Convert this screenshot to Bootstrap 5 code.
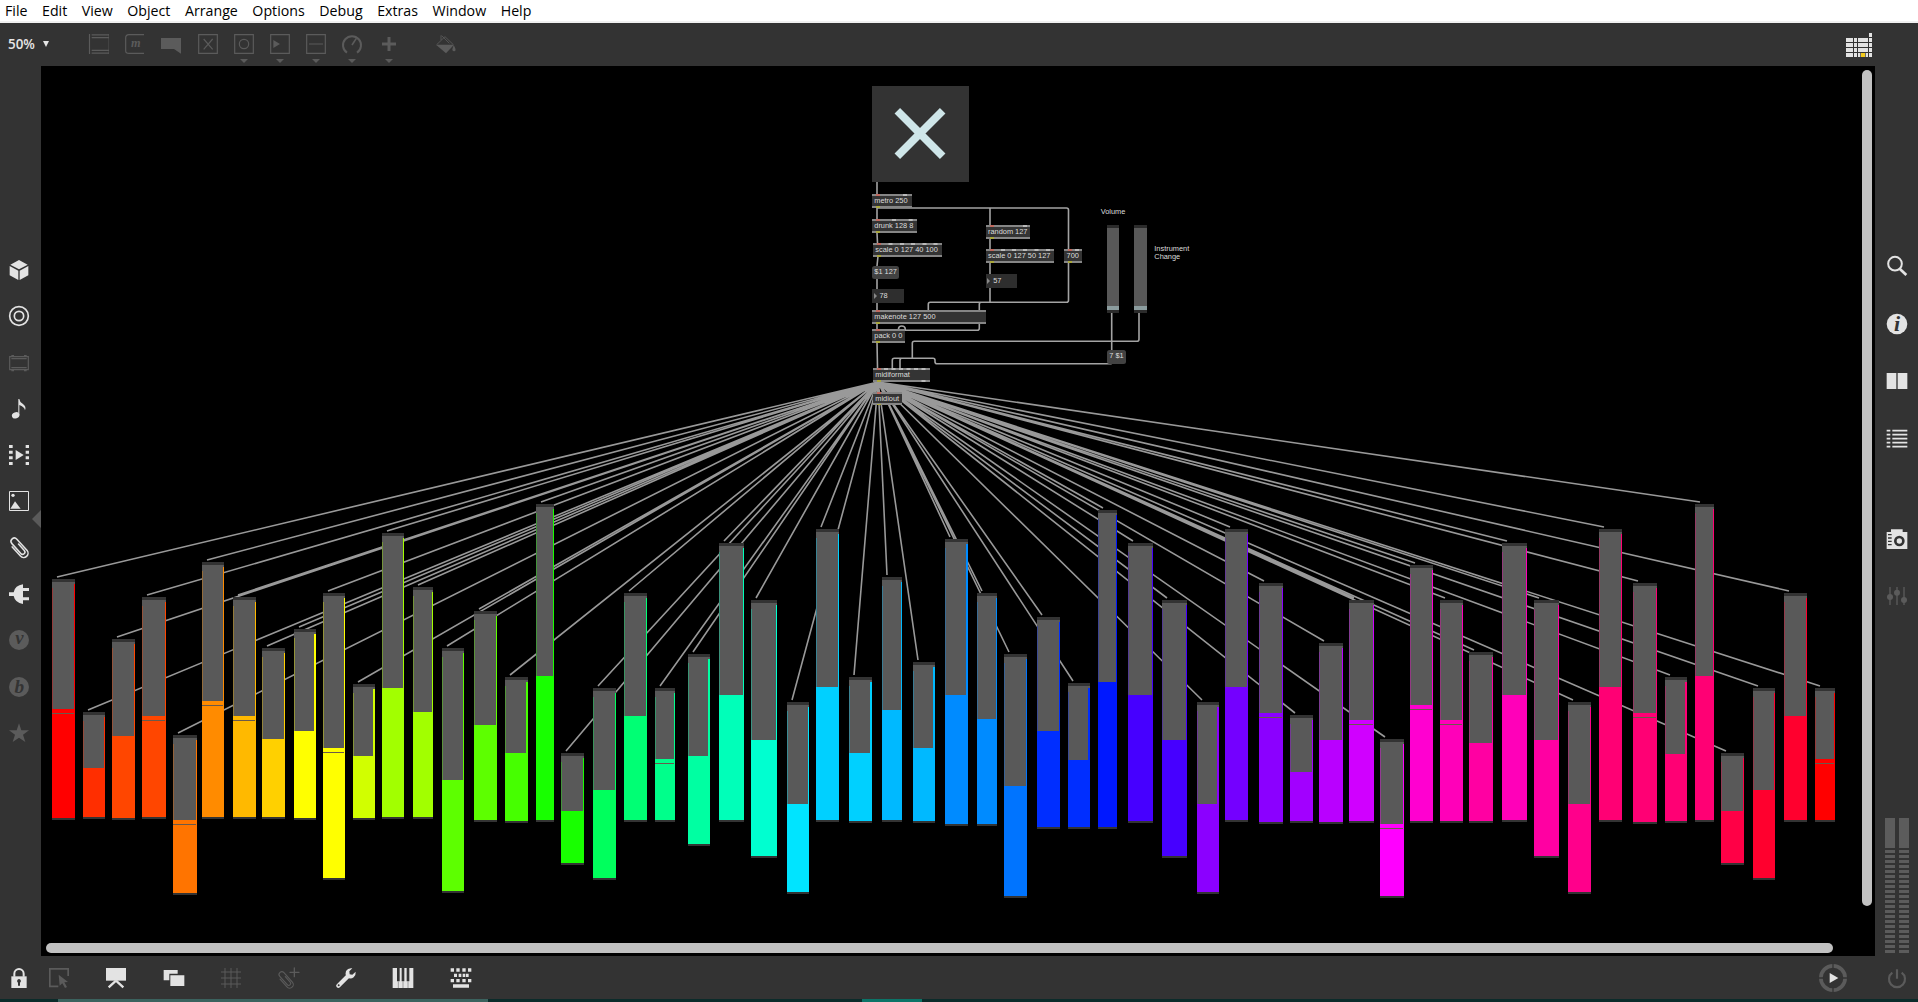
<!DOCTYPE html>
<html lang="en">
<head>
<meta charset="utf-8">
<title>Patcher</title>
<link href="https://cdn.jsdelivr.net/npm/bootstrap@5.3.0/dist/css/bootstrap.min.css" rel="stylesheet">
<style>
  html, body { height: 100%; overflow: hidden; }
  body { background: #333; font-family: "Open Sans", "Noto Sans", sans-serif; line-height: 1; }
  svg { display: block; overflow: visible; flex: none; }
  .menu-strip { height: 23px; background: #fff; border-bottom: 2px solid #f0f0f0; padding-left: 5px; gap: 14.55px; font-size: 14.2px; color: #000; }
  .menu-strip a { color: #000; text-decoration: none; line-height: 21px; }
  .tool-strip { height: 43px; padding: 11px 46px 0 8px; }
  .zoom-box { width: 81px; font-size: 13.4px; font-weight: 600; color: #e6e6e6; padding-top: 4px; gap: 8px; }
  .zoom-arrow { border: 3.5px solid transparent; border-top: 6px solid #e6e6e6; border-bottom: 0; margin-top: 3px; }
  .tools { gap: 16.2px; }
  .tool-apart { margin-left: 21px; }
  .dim { color: #5b5b5b; }
  .lit { color: #e3e3e3; }
  .side-left { width: 41px; padding: 194px 0 0 9.3px; gap: 26.3px; }
  .side-right { width: 43px; padding: 190px 0 3px 11.7px; gap: 37.7px; }
  .side-apart { margin-top: 42px; }
  .canvas-area { background: #000; }
  .foot-strip { height: 43px; padding: 12px 11px 0 9.3px; }
  .foot-tools { gap: 37.4px; margin-left: 19.7px; }
  .play-ring { margin-top: -4px; margin-right: 40.3px; }
  .task-strip { height: 3px; background: #0b2b2a; padding-left: 58px; }
  .task-a { width: 430px; background: #3b625e; }
  .task-b { width: 60px; background: #0c7468; margin-left: 374px; }
  .meters { gap: 4px; margin-left: -1.7px; }
  .meter { width: 10px; }
  .meter-top { height: 30px; background: #5c5c5c; margin-bottom: 2px; }
  .meter-bars { height: 103px; background: repeating-linear-gradient(#5c5c5c 0 3px, #333 3px 5px); }
  .thumb { position: absolute; background: #c1c1c1; border-radius: 5px; z-index: 5; }
  .thumb-y { left: 1821px; top: 4px; width: 10px; height: 836px; }
  .thumb-x { left: 5px; top: 877px; width: 1787px; height: 10px; }
  .tab-top { position: absolute; left: 909px; top: -9px; border: 8.5px solid transparent; border-bottom-color: #5a5a5a; border-top: 0; }
  .tab-left { position: absolute; left: -9px; top: 444px; border: 9px solid transparent; border-right-color: #5a5a5a; border-left: 0; }
  /* patcher content: all coordinates are window pixels, shifted to the canvas origin */
  .patch { position: absolute; left: -41px; top: -66px; width: 1918px; height: 1002px; font-family: "Liberation Sans", Arial, sans-serif; font-size: 7.4px; color: #ddd; }
  .patch > * { position: absolute; white-space: nowrap; }
  .obj { background: #343434; border: solid #868686; border-width: 2px 0; line-height: 9.4px; padding-left: 2.3px; }
  .obj::before, .obj::after { content: ""; position: absolute; left: 4px; width: 4px; height: 1.5px; background: #c0695e; top: -2px; }
  .obj::after { top: auto; bottom: -2px; background: #a9a73c; }
  .msg { background: #424242; border-radius: 2.5px; line-height: 12.6px; padding-left: 2.3px; }
  .num { background: #2e2e2e; line-height: 13.8px; padding-left: 7.5px; }
  .num::before { content: ""; position: absolute; left: 1.5px; top: 3.5px; border: 3px solid transparent; border-left: 3.5px solid #888; border-right: 0; }
  .tog { background: #333; }
  .vsl { background: #585858; border: solid #2b2b2b; border-width: 3px 0; }
  .vsl::after { content: ""; position: absolute; left: 0; right: 0; bottom: 0; height: 4px; background: #8b9c9e; }
  .sld { background: #595959; border: solid #333; border-width: 3px 0 2px; }
  .sld i { position: absolute; display: block; background: currentColor; }
  .sld .edge-r { right: 0; top: 2px; bottom: 0; }
  .sld .edge-l { left: 0; top: 6px; bottom: 0; width: 1px; opacity: .35; }
  .sld .fillp { left: 0; right: 0; bottom: 0; }
  .sld .markp { left: 0; right: 1px; height: 1px; background: #6a5a4c; }
</style>
<script src="https://cdn.jsdelivr.net/npm/bootstrap@5.3.0/dist/js/bootstrap.bundle.min.js"></script>
</head>
<body class="d-flex flex-column">

<nav class="menu-strip d-flex flex-shrink-0">
  <a>File</a><a>Edit</a><a>View</a><a>Object</a><a>Arrange</a><a>Options</a><a>Debug</a><a>Extras</a><a>Window</a><a>Help</a>
</nav>

<header class="tool-strip d-flex flex-shrink-0 align-items-start">
  <div class="zoom-box d-flex align-items-start"><span>50%</span><span class="zoom-arrow"></span></div>
  <div class="tools d-flex dim">
    <svg width="20" height="30" viewBox="0 0 60 90" fill="none" stroke="currentColor" stroke-width="3"><path d="M1.500 0V60M8 2.500H60M8 11H60M8 49H60M8 57.500H60" stroke-width="3.500"/><path d="M58.500 0V60" opacity=".4"/></svg>
    <svg width="20" height="30" viewBox="0 0 60 90"><path d="M57 2H12Q2 2 2 12V50Q2 58 12 58H57" fill="none" stroke="currentColor" stroke-width="3.500"/><text x="18" y="40" font-family="Liberation Serif" font-style="italic" font-weight="bold" font-size="37" fill="currentColor">m</text></svg>
    <svg width="20" height="30" viewBox="0 0 60 90"><path d="M0 12H60V59L39 45H0Z" fill="currentColor"/></svg>
    <svg width="20" height="30" viewBox="0 0 60 90" fill="none" stroke="currentColor" stroke-width="3.500"><path d="M2 2H58V58H2ZM17 15L44 46M44 15L17 46"/></svg>
    <svg width="20" height="30" viewBox="0 0 60 90" fill="none" stroke="currentColor" stroke-width="3.500"><path d="M2 2H58V58H2Z"/><circle cx="30" cy="30" r="14"/><path d="M18 75H42L30 87Z" fill="currentColor" stroke="none"/></svg>
    <svg width="20" height="30" viewBox="0 0 60 90" fill="none" stroke="currentColor" stroke-width="3.500"><path d="M2 2H58V58H2Z"/><path d="M10 18L30 30L10 42ZM18 75H42L30 87Z" fill="currentColor" stroke="none"/></svg>
    <svg width="20" height="30" viewBox="0 0 60 90" fill="none" stroke="currentColor" stroke-width="3.500"><path d="M2 2H58V58H2ZM9 30H51"/><path d="M18 75H42L30 87Z" fill="currentColor" stroke="none"/></svg>
    <svg width="20" height="30" viewBox="0 0 60 90" fill="none" stroke="currentColor" stroke-width="6"><path d="M15 56A27 27 0 1 1 45 56"/><path d="M30 33L43 13" stroke-width="5"/><path d="M18 75H42L30 87Z" fill="currentColor" stroke="none"/></svg>
    <svg width="20" height="30" viewBox="0 0 60 90" fill="none" stroke="currentColor" stroke-width="9"><path d="M30 9V51M9 30H51"/><path d="M18 75H42L30 87Z" fill="currentColor" stroke="none"/></svg>
    <svg class="tool-apart" width="20" height="30" viewBox="0 0 60 90" fill="none" stroke="currentColor" stroke-width="2.500"><path d="M2 32L27 8L52 32M17 5L40 28M15 18V4"/><path d="M0 32H54L30 58Z" fill="currentColor" stroke="none"/><path d="M53 34Q62 48 57 51Q52 54 49 48Q49 44 53 34Z" fill="currentColor" stroke="none"/></svg>
  </div>
  <svg class="ms-auto lit" width="26" height="24" viewBox="0 3 78 72" fill="currentColor"><path d="M69 0h9v12h-9zM0 15h21v12H0zM24 15h9v12h-9zM36 15h30v12H36zM69 15h9v12h-9zM0 30h21v12H0zM24 30h9v12h-9zM36 30h30v12H36zM69 30h9v12h-9zM0 45h21v12H0zM24 45h9v12h-9zM36 45h30v12H36zM69 45h9v12h-9zM0 60h21v12H0zM24 60h9v12h-9zM36 60h7v12h-7zM59 60h7v12h-7zM69 60h9v12h-9z"/><path d="M45 60h12v12H45z" fill="#f3cb1c"/></svg>
</header>

<div class="d-flex flex-grow-1 overflow-hidden">
  <aside class="side-left d-flex flex-column flex-shrink-0 lit">
    <svg width="20" height="20" viewBox="0 0 60 60" fill="currentColor"><path d="M30 0L56 14L30 28L4 14ZM2 18L28 32V60L2 46ZM58 18L32 32V60L58 46Z"/></svg>
    <svg width="20" height="20" viewBox="0 0 60 60" fill="none" stroke="currentColor" stroke-width="5"><circle cx="30" cy="30" r="28"/><circle cx="30" cy="30" r="14"/></svg>
    <svg class="dim" width="20" height="20" viewBox="0 0 60 60" fill="none" stroke="currentColor" stroke-width="3.500"><path d="M2 11H58V50H2ZM7 17H53M7 44H53M7 8H15M45 8H53M7 53H15M45 53H53"/></svg>
    <svg width="20" height="20" viewBox="0 0 60 60" fill="currentColor"><ellipse cx="20" cy="49" rx="11.500" ry="9" transform="rotate(-20 20 49)"/><path d="M28 0H31Q32 9 41 14Q53 22 48 34Q46 23 31 18V49H28Z"/></svg>
    <svg width="20" height="20" viewBox="0 0 60 60" fill="currentColor"><path d="M0 0h11v9H0zM0 17h11v9H0zM0 34h11v9H0zM0 51h11v9H0zM50 0h10v9H50zM50 17h10v9H50zM50 34h10v9H50zM50 51h10v9H50zM20 15L44 30L20 45Z"/></svg>
    <svg width="20" height="20" viewBox="0 0 60 60" fill="currentColor"><path d="M1.500 1.500H58.500V58.500H1.500Z" fill="none" stroke="currentColor" stroke-width="3"/><circle cx="12" cy="13" r="5"/><path d="M4 53L18 31L35 53Z"/></svg>
    <svg width="20" height="20" viewBox="0 0 60 60" fill="none" stroke="currentColor" stroke-width="4.600" stroke-linecap="round"><path transform="rotate(-42 30 30)" d="M37 20V46A7 7 0 0 1 23 46V6A10 10 0 0 1 43 6V51A13 13 0 0 1 17 51V14"/></svg>
    <svg width="20" height="20" viewBox="0 0 60 60" fill="currentColor"><path d="M0 25H14Q18 4 42 1V12H60V21H42V40H60V49H42V60Q18 56 14 36H0Z"/></svg>
    <svg class="dim" width="20" height="20" viewBox="0 0 60 60"><circle cx="30" cy="30" r="30" fill="currentColor"/><text x="31" y="43" text-anchor="middle" font-family="Liberation Serif" font-style="italic" font-weight="bold" font-size="56" fill="#333">v</text></svg>
    <svg class="dim" width="20" height="20" viewBox="0 0 60 60"><circle cx="30" cy="30" r="30" fill="currentColor"/><text x="31" y="48" text-anchor="middle" font-family="Liberation Serif" font-style="italic" font-weight="bold" font-size="58" fill="#333">b</text></svg>
    <svg class="dim" width="20" height="20" viewBox="0 0 60 60" fill="currentColor"><path d="M30 1L37 22H60L42 35L49 57L30 44L11 57L18 35L0 22H23Z"/></svg>
  </aside>

  <main class="canvas-area position-relative flex-grow-1">
    <div class="patch" id="patch"></div>
    <div class="tab-top"></div>
    <div class="tab-left"></div>
    <div class="thumb thumb-y"></div>
    <div class="thumb thumb-x"></div>
  </main>

  <aside class="side-right d-flex flex-column flex-shrink-0 lit">
    <svg width="20" height="20" viewBox="0 0 60 60" fill="none" stroke="currentColor" stroke-width="6"><circle cx="24" cy="23" r="20.500"/><path d="M38 38L58 57" stroke-width="8"/></svg>
    <svg width="20" height="20" viewBox="0 0 60 60"><circle cx="30" cy="30" r="31" fill="currentColor"/><text x="30" y="51" text-anchor="middle" font-family="Liberation Serif" font-style="italic" font-weight="bold" font-size="66" fill="#333">i</text></svg>
    <svg width="20" height="20" viewBox="0 0 60 60" fill="currentColor"><path d="M-1 6H28V54H-1ZM32 6H61V54H32Z"/></svg>
    <svg width="20" height="20" viewBox="0 0 60 60" fill="none" stroke="currentColor" stroke-width="5"><path d="M-1 5H10M16 5H61M-1 17H10M16 17H61M-1 29H10M16 29H61M-1 41H10M16 41H61M-1 53H10M16 53H61"/></svg>
    <svg class="side-apart" width="20" height="20" viewBox="0 0 60 60"><path d="M12 1H47V9H61V60H-1V9H12Z" fill="currentColor"/><circle cx="37" cy="36" r="12" fill="none" stroke="#333" stroke-width="8"/><path d="M3 17H14M3 27H14M3 37H14M3 47H14" stroke="#333" stroke-width="4"/></svg>
    <svg class="dim" width="20" height="20" viewBox="0 0 60 60" fill="currentColor"><path d="M7 3h4v54H7zM28 3h4v54h-4zM49 3h4v54h-4z"/><circle cx="9" cy="33" r="9"/><circle cx="30" cy="20" r="9"/><circle cx="51" cy="42" r="9"/></svg>
    <div class="meters d-flex mt-auto">
      <div class="meter"><div class="meter-top"></div><div class="meter-bars"></div></div>
      <div class="meter"><div class="meter-top"></div><div class="meter-bars"></div></div>
    </div>
  </aside>
</div>

<footer class="foot-strip d-flex flex-shrink-0 lit">
  <svg width="20" height="20" viewBox="0 0 60 60"><path d="M16 26V17A14 14 0 0 1 44 17V26" fill="none" stroke="currentColor" stroke-width="6"/><path d="M7 25H53V60H7Z" fill="currentColor"/><path d="M30 33a6 6 0 0 1 3 11v9h-6v-9a6 6 0 0 1 3-11" fill="#333"/></svg>
  <div class="foot-tools d-flex">
    <svg class="dim" width="20" height="20" viewBox="0 0 60 60"><path d="M57.500 24V2.500H2.500V55H28" fill="none" stroke="currentColor" stroke-width="5"/><path d="M29 20L57 42L46 43L54 57L48 60L40 46L32 53Z" fill="currentColor"/></svg>
    <svg width="20" height="20" viewBox="0 0 60 60"><path d="M0 0H60V38H0Z" fill="currentColor"/><path d="M30 38L8 58M30 38L52 58" stroke="currentColor" stroke-width="7"/></svg>
    <svg width="20" height="20" viewBox="0 0 60 60" fill="currentColor"><path d="M-1 6H41V17H16V37H-1ZM19 22H61V54H19Z"/></svg>
    <svg class="dim" width="20" height="20" viewBox="0 0 60 60" fill="none" stroke="currentColor" stroke-width="3"><path d="M12 0V60M30 0V60M48 0V60M0 12H60M0 30H60M0 48H60"/></svg>
    <svg class="dim" width="20" height="20" viewBox="0 0 60 60" fill="none" stroke="currentColor" stroke-width="4" stroke-linecap="round"><path transform="translate(-5 11) scale(.84) rotate(-42 30 30)" d="M37 20V46A7 7 0 0 1 23 46V6A10 10 0 0 1 43 6V51A13 13 0 0 1 17 51V14"/><path d="M46 0V26M33 13H60"/></svg>
    <svg width="20" height="20" viewBox="0 0 60 60"><path d="M7 53L34 26" stroke="currentColor" stroke-width="13" stroke-linecap="round"/><path d="M49 1Q36 -1 30 9Q26 18 32 28Q44 35 53 28Q60 22 59 11L49 20L41 19L40 10Z" fill="currentColor"/><circle cx="8" cy="52" r="3" fill="#333"/></svg>
    <svg width="20" height="20" viewBox="0 0 60 60"><path d="M-1 0H61V60H-1Z" fill="currentColor"/><path d="M12 0h8v40h-8zM26 0h8v40h-8zM41 0h8v40h-8z" fill="#333"/><path d="M16 40V60M30 40V60M45 40V60" stroke="#777" stroke-width="2"/></svg>
    <svg width="20" height="20" viewBox="0 0 60 60" fill="currentColor"><path d="M-1 1h10v10H-1zM16 1h10v10H16zM34 1h10v10H34zM51 1h10v10H51zM9 17h9v10H9zM23 17h8v10H23zM35 17h8v10H35zM45 17h8v10H45zM-1 33h10v10H-1zM16 33h10v10H16zM34 33h10v10H34zM51 33h10v10H51zM6 49H54V59H6Z"/></svg>
  </div>
  <svg class="play-ring ms-auto" width="28" height="28" viewBox="-42 -42 84 84"><circle r="36.500" fill="none" stroke="#5b5b5b" stroke-width="11"/><path d="M0 -43V-28M0 28V43M-43 0H-28M28 0H43" stroke="#333" stroke-width="4"/><path d="M-10 -15L16 0L-10 15Z" fill="currentColor"/></svg>
  <svg class="dim" width="20" height="20" viewBox="-30 -33 60 60" fill="none" stroke="currentColor" stroke-width="6.500"><path d="M-14 -19A24 24 0 1 0 14 -19M0 -29V-1"/></svg>
</footer>
<div class="task-strip d-flex flex-shrink-0"><div class="task-a"></div><div class="task-b"></div></div>

<script>
// multislider columns: left, right, top, value line, bottom, colour, peak mark (0 = none), right edge width
const S = [
[52,75,579,709,820,'#ff0000',713,1],[83,105,712,768,819,'#ff2e00',0,1],[112,135,639,736,820,'#ff4600',0,1],
[142,166,597,716,819,'#ff4600',720,1],[173,197,735,820,895,'#ff7400',824,1],[202,224,562,701,819,'#ff8b00',705,1],
[233,256,597,716,819,'#ffb900',720,1],[262,285,648,739,819,'#ffd000',0,1],[294,316,629,731,820,'#ffff00',0,2],
[323,345,593,748,880,'#ffff00',752,1],[353,375,684,756,820,'#d1ff00',0,2],[382,404,533,688,819,'#a2ff00',0,1],
[413,433,587,712,819,'#a2ff00',0,1],[442,464,648,780,893,'#5dff00',0,1],[474,497,611,725,822,'#5dff00',0,1],
[505,528,677,753,823,'#46ff00',0,2],[536,554,504,676,822,'#18ff00',0,1],[561,584,753,811,865,'#18ff00',0,1],
[593,616,688,790,880,'#00ff5d',0,1],[624,647,593,716,822,'#00ff74',0,1],[655,675,688,759,822,'#00ff8b',763,1],
[688,710,654,756,846,'#00ffa2',0,2],[719,744,543,695,822,'#00ffb9',0,1],[751,777,600,740,858,'#00ffd0',0,1],
[787,809,702,804,894,'#00e4ff',0,1],[816,839,529,687,822,'#00d0ff',0,1],[849,872,677,753,823,'#00d0ff',0,2],
[882,902,577,710,822,'#00b9ff',0,1],[913,935,662,748,823,'#00b9ff',0,2],[945,968,539,695,826,'#008bff',0,2],
[977,997,593,719,826,'#008bff',0,1],[1004,1027,654,786,898,'#0074ff',0,1],[1037,1060,617,731,829,'#002eff',0,1],
[1068,1090,683,760,829,'#002eff',0,2],[1098,1117,510,682,829,'#0018ff',0,1],[1128,1153,543,695,823,'#4600ff',0,1],
[1162,1187,600,740,858,'#4600ff',0,1],[1197,1219,702,804,894,'#8b00ff',0,2],[1225,1248,529,687,822,'#7400ff',0,1],
[1259,1283,583,713,824,'#8b00ff',717,1],[1290,1313,715,772,823,'#a200ff',0,1],[1319,1343,643,740,824,'#b900ff',0,1],
[1349,1374,600,720,823,'#d000ff',724,1],[1380,1404,739,824,898,'#ff00ff',828,1],[1410,1433,565,705,823,'#ff00d0',709,1],
[1440,1463,600,720,823,'#ff00b9',724,1],[1469,1493,652,743,823,'#ff00a2',0,1],[1502,1527,543,695,822,'#ff00b9',0,1],
[1534,1559,600,740,858,'#ff00a2',0,1],[1568,1591,702,804,894,'#ff008b',0,1],[1599,1622,529,687,822,'#ff0074',0,1],
[1633,1657,583,713,824,'#ff0074',717,1],[1665,1687,677,754,823,'#ff0074',0,2],[1695,1714,504,676,822,'#ff0074',0,1],
[1721,1744,753,811,865,'#ff0046',0,1],[1753,1775,688,790,880,'#ff002e',0,1],[1784,1807,593,716,822,'#ff002e',0,1],
[1815,1835,688,759,822,'#ff0000',763,1]];

// patcher boxes: class, left, top, width, height, text
const B = [
['obj',872,194,39.5,13.6,'metro 250'],['obj',872,219,44.7,13.8,'drunk 128 8'],['obj',873,243,68.5,13.6,'scale 0 127 40 100'],
['msg',872,265.5,27,13,'$1 127'],['num',872,289,31.7,14,'78'],['obj',872,310.4,114.4,13.6,'makenote 127 500'],
['obj',872,329.3,32.8,13.6,'pack 0 0'],['obj',873,368,57,13.6,'midiformat'],['obj',873,392,29,13.4,'midiout'],
['obj',985.7,225,44.3,13.8,'random 127'],['obj',985.7,249,68.3,13.6,'scale 0 127 50 127'],['num',985.7,274,31.7,13.6,'57'],
['obj',1064.3,249,17.3,13.6,'700'],['msg',1107,350.3,19.3,13.3,'7 $1'],
['tog',872,85.5,96.7,96.7,''],['vsl',1106.7,225.3,12.3,87.3,''],['vsl',1134,225.3,12.5,87.3,''],
['cmt',1100.7,208,30,8,'Volume'],['cmt',1154.3,244.7,40,8,'Instrument'],['cmt',1154.3,253.3,40,8,'Change']];

// extra inlets along the top edge of a box: x, y
const inlets = [[903,194],[892,219],[908.7,219],[888.5,243],[900,243],[911,243],[922.5,243],[933.5,243],[1023,225],
[1001,249],[1012,249],[1023,249],[1034.5,249],[1046,249],[1075,249],[884,368],[891.5,368],[899,368],[906.5,368],[914,368],[921.5,368],[921.5,380]];

const cords = 'M877 182V194M877 207V219M877 233L877.5 243M878 256L877 266M877 278V289M877 303V311M877 323V330M877 342L877.5 368' +
 'M877 208H1066.5Q1068.5 208 1068.5 210V249M990 208V225M990 238V249M990 262V274M990 287V302.3' +
 'M1068.5 262V300.3Q1068.5 302.3 1066.5 302.3H930.3Q928.3 302.3 928.3 304.3V311M990 302.3H981.3Q979.3 302.3 979.3 304.3V311' +
 'M979.3 323V328.3Q979.3 330.3 977.3 330.3H905.3V329Q905 326 901.8 326Q898.5 326 898.5 329V330' +
 'M1139 312V339.3Q1139 341.3 1137 341.3H914.3Q912.3 341.3 912.3 343.3V358.3M1111.7 312V351' +
 'M1111.7 363.7H937Q935 363.7 935 361.7V360.3Q935 358.3 933 358.3H894.3Q892.3 358.3 892.3 360.3V368M900 368V360.3Q900 358.3 902 358.3';
const fan = S.map(s => `M878 382L${s[0] + 5} ${s[2] - 2}`).join('');

let h = `<svg width="1918" height="1002" fill="none"><path d="${fan}" stroke="#999" stroke-width="1.6"/><path d="${cords}" stroke="#a3a3a3" stroke-width="1.6"/></svg>`;
for (const [l, r, t, v, b, c, m, e] of S) {
  h += `<div class="sld" style="left:${l}px;top:${t}px;width:${r - l}px;height:${b - t}px;color:${c}"><i class="edge-l"></i><i class="edge-r" style="width:${e}px"></i><i class="fillp" style="height:${b - v - 2}px"></i>` +
    (m ? `<i class="markp" style="top:${m - t - 3}px"></i>` : '') + '</div>';
}
for (const [k, x, y, w, ht, s] of B)
  h += `<div class="${k}" style="left:${x}px;top:${y}px;width:${w}px;height:${ht}px">${s}</div>`;
h += '<svg width="1918" height="1002" fill="none"><path d="M897.3 110.7L942.7 156.3M942.7 110.7L897.3 156.3" stroke="#cfe6e9" stroke-width="7.8"/>' +
  `<path d="${inlets.map(p => `M${p[0]} ${p[1] + 1}h4`).join('')}" stroke="#ccc" stroke-width="1.4"/></svg>`;
document.getElementById('patch').innerHTML = h;
</script>
</body>
</html>
